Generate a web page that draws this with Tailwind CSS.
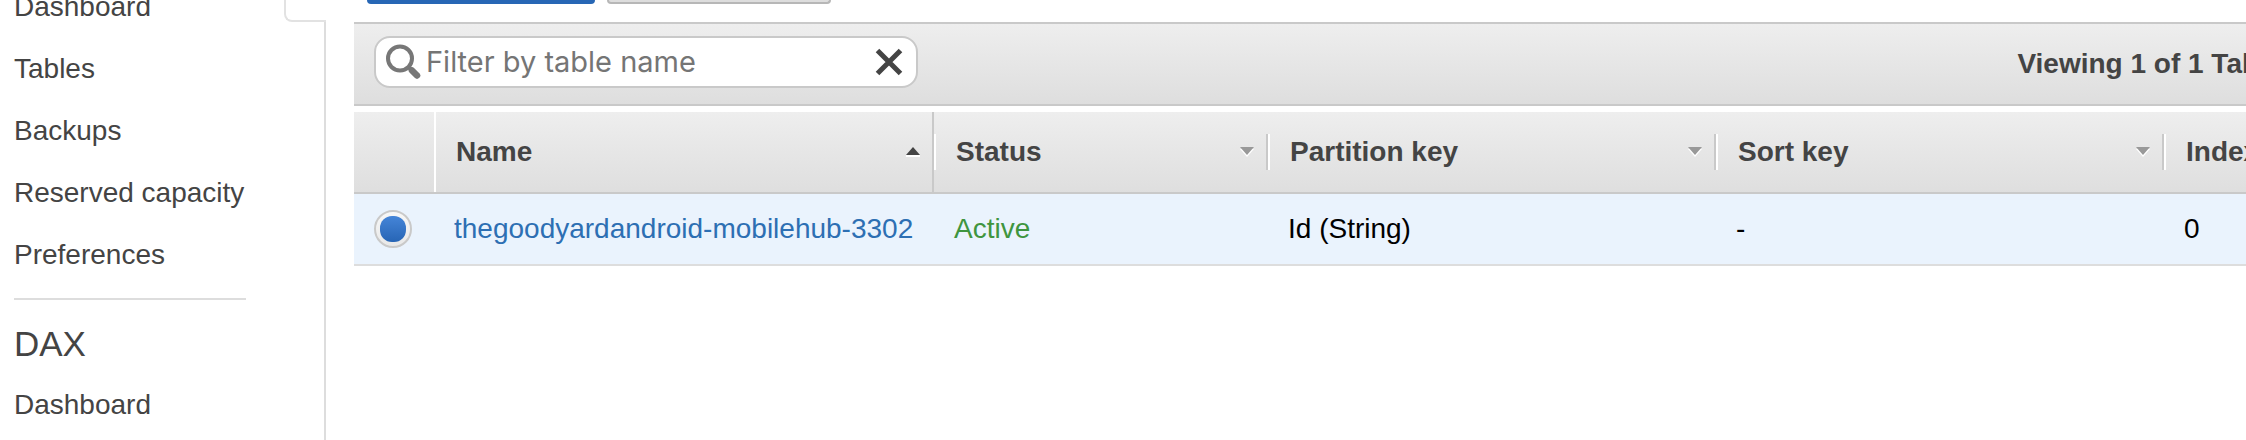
<!DOCTYPE html>
<html lang="en">
  <head>
    <meta charset="UTF-8" />
    <meta name="viewport" content="width=device-width, initial-scale=1.0" />
    <script src="https://cdn.jsdelivr.net/npm/@tailwindcss/browser@4"></script>
    <title>DynamoDB Tables</title>
  </head>

  <body class="bg-white text-[#444] font-['Liberation_Sans',sans-serif] text-[28px]">
    <div class="flex min-h-screen overflow-hidden">
      <!-- Sidebar -->
      <aside class="flex shrink-0">
        <nav class="-mt-6 w-[284px] pl-3.5 pr-[38px] leading-[62px]">
          <a href="#" class="block">Dashboard</a>
          <a href="#" class="block">Tables</a>
          <a href="#" class="block">Backups</a>
          <a href="#" class="block whitespace-nowrap">Reserved capacity</a>
          <a href="#" class="block">Preferences</a>
          <hr class="mt-3 border-t-2 border-[#ddd]" />
          <h2 class="mt-6 mb-2.5 text-[35px] leading-10">DAX</h2>
          <a href="#" class="block">Dashboard</a>
        </nav>
        <div class="flex w-[42px] flex-col">
          <div class="h-[22px] rounded-bl-lg border-b-2 border-l-2 border-[#e2e2e2]"></div>
          <div class="flex-1 border-r-2 border-[#ddd]"></div>
        </div>
      </aside>

      <main class="ml-7 min-w-[2000px] flex-1">
        <!-- Actions -->
        <div class="flex h-[22px] items-start gap-3 pl-[13px]">
          <button type="button" aria-label="Create table" class="h-1 w-[228px] rounded-b-md bg-[#2767b5]"></button>
          <button type="button" aria-label="Delete table" class="h-1 w-[224px] rounded-b-md border-x-2 border-b-2 border-[#b7b7b7] bg-[#ddd]"></button>
        </div>

        <!-- Filter bar -->
        <div class="flex items-center justify-between border-y-2 border-[#c9c9c9] bg-linear-to-b from-[#eee] to-[#dedede] pl-5 pr-14">
          <div class="mb-1 flex h-[52px] w-[544px] items-center rounded-[16px] border-2 border-[#c9c9c9] bg-white pl-2.5 pr-[13px]">
            <svg class="h-9 w-9 shrink-0" viewBox="0 0 36 36" fill="none" stroke="#777">
              <circle cx="14" cy="14.5" r="12" stroke-width="4" />
              <path d="M23 23.5l3 3" stroke-width="4" />
              <path d="M26 26.5l5 5" stroke-width="6.500" stroke-linecap="round" />
            </svg>
            <input type="text" aria-label="Filter by table name" placeholder="Filter by table name" class="ml-1 min-w-0 flex-1 font-[Inter,sans-serif] text-[29px] leading-9 placeholder-[#757575] outline-none" />
            <button type="button" aria-label="Clear filter">
              <svg class="h-7 w-7" viewBox="0 0 28 28" fill="none" stroke="#444" stroke-width="5">
                <path d="M2.500 2.500l23 23M25.500 2.500l-23 23" />
              </svg>
            </button>
          </div>
          <p class="font-bold leading-[80px] whitespace-nowrap">Viewing 1 of 1 Tables</p>
        </div>

        <!-- Tables list -->
        <table class="mt-1.5 w-full table-fixed border-separate border-spacing-0 text-left">
          <colgroup>
            <col class="w-[80px]" />
            <col class="w-[500px]" />
            <col class="w-[334px]" />
            <col class="w-[448px]" />
            <col class="w-[448px]" />
            <col />
          </colgroup>
          <thead class="bg-linear-to-b from-[#eee] to-[#dedede] leading-[80px]">
            <tr>
              <th class="border-b-2 border-[#c9c9c9] p-0"></th>
              <th class="border-b-2 border-[#c9c9c9] p-0">
                <div class="flex items-center justify-between border-r-2 border-l-2 border-r-[#c9c9c9] border-l-white pl-5 pr-[11px]">
                  Name
                  <svg class="h-2.5 w-4" viewBox="0 0 16 10"><path d="M1 9h14" stroke="#fff" stroke-width="2" /><path d="M8 0l7 8H1z" fill="#444" /></svg>
                </div>
              </th>
              <th class="border-b-2 border-[#c9c9c9] p-0">
                <div class="flex h-9 items-center justify-between border-r-2 border-l-2 border-r-[#c9c9c9] border-l-white pl-5 pr-[11px]">
                  Status
                  <svg class="h-2.5 w-4" viewBox="0 0 16 10"><path d="M1 2l7 8 7-8z" fill="#fff" /><path d="M1 0h14L8 8z" fill="#999" /></svg>
                </div>
              </th>
              <th class="border-b-2 border-[#c9c9c9] p-0">
                <div class="flex h-9 items-center justify-between border-r-2 border-l-2 border-r-[#c9c9c9] border-l-white pl-5 pr-[11px]">
                  Partition key
                  <svg class="h-2.5 w-4" viewBox="0 0 16 10"><path d="M1 2l7 8 7-8z" fill="#fff" /><path d="M1 0h14L8 8z" fill="#999" /></svg>
                </div>
              </th>
              <th class="border-b-2 border-[#c9c9c9] p-0">
                <div class="flex h-9 items-center justify-between border-r-2 border-l-2 border-r-[#c9c9c9] border-l-white pl-5 pr-[11px]">
                  Sort key
                  <svg class="h-2.5 w-4" viewBox="0 0 16 10"><path d="M1 2l7 8 7-8z" fill="#fff" /><path d="M1 0h14L8 8z" fill="#999" /></svg>
                </div>
              </th>
              <th class="border-b-2 border-[#c9c9c9] p-0">
                <div class="flex h-9 items-center border-l-2 border-white pl-5">Indexes</div>
              </th>
            </tr>
          </thead>
          <tbody class="bg-[#eaf3fd] leading-[70px] text-black">
            <tr>
              <td class="border-b-2 border-[#ddd] p-0 pl-5">
                <input type="radio" name="table" checked aria-label="Select table" class="grid h-[38px] w-[38px] appearance-none place-items-center rounded-full border-2 border-[#c9c9c9] bg-linear-to-b from-[#f8f8f8] to-[#e8e8e8] before:h-[26px] before:w-[26px] before:rounded-[12px] before:bg-linear-to-b before:from-[#4585d8] before:to-[#2765b5] before:content-['']" />
              </td>
              <td class="border-b-2 border-[#ddd] p-0 px-5">
                <a href="#" class="block overflow-hidden whitespace-nowrap text-[#2d6fb3]">thegoodyardandroid-mobilehub-330217</a>
              </td>
              <td class="border-b-2 border-[#ddd] p-0 pl-5 text-[#3f953f]">Active</td>
              <td class="border-b-2 border-[#ddd] p-0 pl-5">Id (String)</td>
              <td class="border-b-2 border-[#ddd] p-0 pl-5">-</td>
              <td class="border-b-2 border-[#ddd] p-0 pl-5">0</td>
            </tr>
          </tbody>
        </table>
      </main>
    </div>
  </body>
</html>
